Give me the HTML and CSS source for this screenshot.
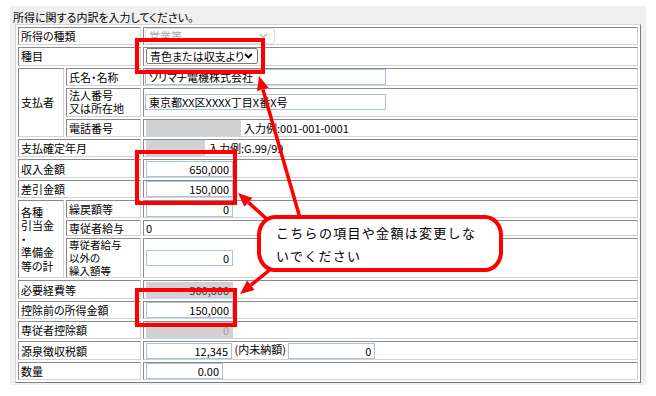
FILE: index.html
```html
<!DOCTYPE html>
<html lang="ja">
<head>
    <meta charset="UTF-8">
    <title>所得の内訳</title>
    <link rel="stylesheet" href="styles.css">
</head>
<body>
    <div class="panel">
        <div class="title">所得に関する内訳を入力してください。</div>

        <!-- 内訳テーブル -->
        <table class="form">
            <colgroup><col class="c1"><col class="c2"><col></colgroup>
            <tr>
                <th colspan="2">所得の種類</th>
                <td>
                    <div class="sel off">
                        <span>営業等</span>
                        <svg width="9" height="6" viewBox="0 0 9 6"><path d="M1 1 L4.5 4.5 L8 1" fill="none" stroke="#b4b4b4" stroke-width="1.2"/></svg>
                    </div>
                </td>
            </tr>
            <tr>
                <th colspan="2">種目</th>
                <td>
                    <div class="sel">
                        <span>青色または収支より</span>
                        <svg width="9" height="6" viewBox="0 0 9 6"><path d="M1 1 L4.5 4.5 L8 1" fill="none" stroke="#000" stroke-width="2"/></svg>
                    </div>
                </td>
            </tr>
            <tr>
                <th rowspan="3">支払者</th>
                <th>氏名・名称</th>
                <td><input class="in wide" value="ソリマチ電機株式会社"></td>
            </tr>
            <tr class="tall">
                <th>法人番号<br>又は所在地</th>
                <td><input class="in wide" value="東京都XX区XXXX丁目X番X号"></td>
            </tr>
            <tr>
                <th>電話番号</th>
                <td><input class="in gray tel" disabled><span class="eg">入力例:001-001-0001</span></td>
            </tr>
            <tr>
                <th colspan="2">支払確定年月</th>
                <td><input class="in gray ym" disabled><span class="eg">入力例:G.99/99</span></td>
            </tr>
            <tr>
                <th colspan="2">収入金額</th>
                <td><input class="in num" value="650,000"></td>
            </tr>
            <tr>
                <th colspan="2">差引金額</th>
                <td><input class="in num" value="150,000"></td>
            </tr>
            <tr>
                <th rowspan="3" class="group">各種<br>引当金<br>・<br>準備金<br>等の計</th>
                <th>繰戻額等</th>
                <td><input class="in num" value="0"></td>
            </tr>
            <tr class="short">
                <th>専従者給与</th>
                <td>0</td>
            </tr>
            <tr class="triple">
                <th>専従者給与<br>以外の<br>繰入額等</th>
                <td><input class="in num" value="0"></td>
            </tr>
            <tr>
                <th colspan="2">必要経費等</th>
                <td><input class="in num gray" value="500,000" disabled></td>
            </tr>
            <tr>
                <th colspan="2">控除前の所得金額</th>
                <td><input class="in num" value="150,000"></td>
            </tr>
            <tr>
                <th colspan="2">専従者控除額</th>
                <td><input class="in num gray faint" value="0" disabled></td>
            </tr>
            <tr>
                <th colspan="2">源泉徴収税額</th>
                <td><input class="in num tax" value="12,345"> (内未納額) <input class="in num" value="0"></td>
            </tr>
            <tr>
                <th colspan="2">数量</th>
                <td><input class="in num qty" value="0.00"></td>
            </tr>
        </table>
    </div>

    <!-- 注意書きの赤枠と矢印 -->
    <svg class="marks" width="656" height="396" viewBox="0 0 656 396">
        <g fill="none" stroke="#ff0000" stroke-width="4">
            <rect x="137" y="40" width="126" height="32"/>
            <rect x="137" y="152" width="98" height="51"/>
            <rect x="137" y="290" width="98" height="35"/>
        </g>
        <g stroke="#ff0000" stroke-width="3.5">
            <line x1="300" y1="218" x2="262.9" y2="89.4"/>
            <line x1="270" y1="222" x2="248.4" y2="202.4"/>
            <line x1="272" y1="268" x2="250.9" y2="285.2"/>
        </g>
        <g fill="#ff0000">
            <polygon points="259,76 268.7,87.8 257.1,91.1"/>
            <polygon points="238,193 252.4,198 244.4,206.8"/>
            <polygon points="240,294 254.7,289.9 247.1,280.5"/>
        </g>
    </svg>

    <div class="note">こちらの項目や金額は変更しな<br>いでください</div>
</body>
</html>
```

FILE: styles.css
```css
body {
    margin: 0;
    background: #fff;
    font-family: "Noto Sans CJK JP", "Noto Sans", sans-serif;
    font-size: 11px;
    color: #000;
    font-feature-settings: "palt";
    position: relative;
    width: 656px;
    height: 396px;
    overflow: hidden;
}
.panel {
    margin: 6px 0 0 10px;
    width: 636px;
    height: 379px;
    background: #f0f0f0;
    padding: 5px 0 0 3px;
    box-sizing: border-box;
}
.title {
    line-height: 13px;
    height: 13px;
}
.form {
    margin-left: 2px;
    width: 626px;
    table-layout: fixed;
    border-collapse: separate;
    border-spacing: 2px;
    border: 1px solid;
    border-color: #d4d4d4 #7c7c7c #7c7c7c #d4d4d4;
    background: #fff;
}
.form col.c1 {
    width: 46px;
}
.form col.c2 {
    width: 75px;
}
.form th,
.form td {
    border: 1px solid;
    border-color: #8a8a8a #d2d2d2 #d2d2d2 #8a8a8a;
    padding: 0 2px;
    height: 16.3px;
    line-height: 12px;
    font-weight: normal;
    text-align: left;
    vertical-align: middle;
    white-space: nowrap;
}
.form tr.tall th,
.form tr.tall td {
    height: 27px;
    line-height: 13.5px;
}
.form tr.short th,
.form tr.short td {
    height: 14px;
}
.form tr.triple th,
.form tr.triple td {
    height: 38px;
    line-height: 12.7px;
}
.form tr.triple th {
    font-size: 10.5px;
}
.form th.group {
    line-height: 13.5px;
}
.sel {
    display: flex;
    align-items: center;
    justify-content: space-between;
    box-sizing: border-box;
    width: 112px;
    height: 16px;
    padding: 0 4px 0 3px;
    border: 1px solid #7a7a7a;
    border-radius: 2px;
    background: #fff;
}
.sel.off {
    width: 130px;
    margin-left: -1px;
    border-color: #e2e2e2;
    color: #a8a8a8;
    padding-right: 6px;
}
.in {
    font: inherit;
    font-size: 11px;
    height: 16px;
    box-sizing: border-box;
    border: 1px solid #a9c1dd;
    background: #fff;
    color: #000;
    padding: 0 3px;
    margin: 0;
    vertical-align: middle;
    outline: none;
}
.in.wide {
    width: 241px;
    margin-left: -1px;
}
.in.num {
    width: 87px;
    text-align: right;
}
.in.tax {
    width: 86px;
}
.in.qty {
    width: 77px;
}
.in.gray {
    background: #d2d2d2;
    border-color: #c6d3e2;
    color: #3c3c3c;
}
.in.gray.faint {
    color: #a0a0a0;
}
.in.tel {
    width: 95px;
}
.in.ym {
    width: 59px;
}
.eg {
    margin-left: 3px;
    vertical-align: middle;
}
.marks {
    position: absolute;
    left: 0;
    top: 0;
    pointer-events: none;
}
.note {
    position: absolute;
    left: 257px;
    top: 215px;
    width: 246px;
    height: 57px;
    box-sizing: border-box;
    border: 4px solid #ff0000;
    border-radius: 18px / 20px;
    background: #fff;
    padding: 2px 0 0 15px;
    font-size: 13px;
    line-height: 23px;
    letter-spacing: 1.3px;
    font-feature-settings: normal;
}
```
